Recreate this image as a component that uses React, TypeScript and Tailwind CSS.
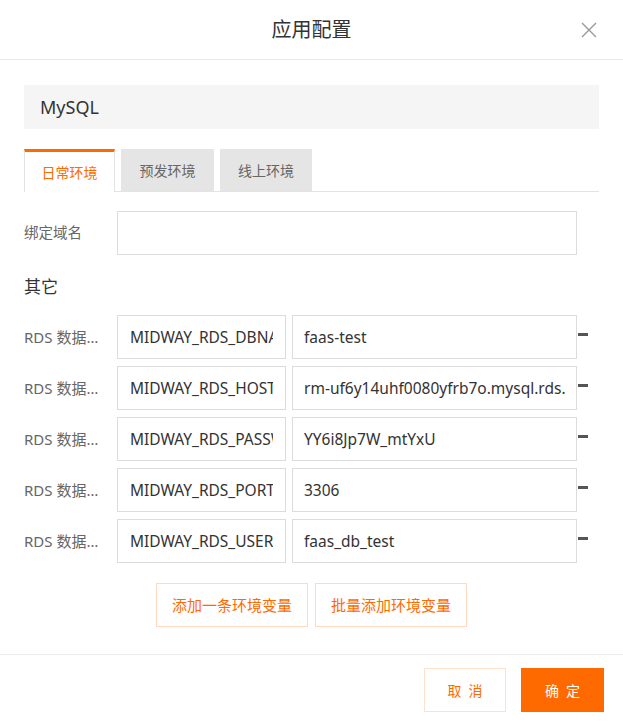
import React from "react";

const FONT = { fontFamily: '"Noto Sans", "Noto Sans CJK SC", sans-serif' };

const rows = [
  { label: "RDS 数据…", key: "MIDWAY_RDS_DBNAME", value: "faas-test" },
  { label: "RDS 数据…", key: "MIDWAY_RDS_HOST", value: "rm-uf6y14uhf0080yfrb7o.mysql.rds.aliyuncs.com" },
  { label: "RDS 数据…", key: "MIDWAY_RDS_PASSWORD", value: "YY6i8Jp7W_mtYxU" },
  { label: "RDS 数据…", key: "MIDWAY_RDS_PORT", value: "3306" },
  { label: "RDS 数据…", key: "MIDWAY_RDS_USER", value: "faas_db_test" },
];

export default function App() {
  return (
    <div className="w-[623px] h-[726px] bg-white text-[#333] overflow-hidden" style={FONT}>
      {/* header */}
      <div className="relative h-[60px] border-b border-[#e8e8e8] flex items-center justify-center">
        <span className="text-[20px] leading-[28px] text-[#333]">应用配置</span>
        <button className="absolute right-[26px] top-[22px] w-[16px] h-[16px] text-[#999]">
          <svg viewBox="0 0 16 16" width="16" height="16" fill="none" stroke="currentColor" strokeWidth="1.4">
            <path d="M1 1 L15 15 M15 1 L1 15" />
          </svg>
        </button>
      </div>

      <div className="px-[24px]">
        {/* name box */}
        <div className="mt-[25px] h-[44px] bg-[#f5f5f5] flex items-center px-[16px] text-[18px] text-[#333]">
          MySQL
        </div>

        {/* tabs */}
        <div className="mt-[20px] flex items-end gap-[6px] border-b border-[#e3e3e3] h-[43px]">
          <div className="h-[43px] w-[91px] -mb-px bg-white border-t-[3px] border-t-[#ff6a00] border-x border-x-[#e3e3e3] flex items-center justify-center text-[14px] text-[#ff6a00]">
            日常环境
          </div>
          <div className="h-[42px] w-[93px] bg-[#e5e5e5] flex items-center justify-center text-[14px] text-[#666]">
            预发环境
          </div>
          <div className="h-[42px] w-[92px] bg-[#e5e5e5] flex items-center justify-center text-[14px] text-[#666]">
            线上环境
          </div>
        </div>

        {/* domain */}
        <div className="mt-[19px] flex items-center">
          <div className="w-[93px] text-[14.5px] text-[#666]">绑定域名</div>
          <input
            readOnly
            className="w-[460px] h-[44px] border border-[#dcdcdc] px-[12px] outline-none"
          />
        </div>

        <div className="mt-[20px] text-[17px] leading-[24px] text-[#333]">其它</div>

        <div className="mt-[16px] flex flex-col gap-[7px]">
          {rows.map((r) => (
            <div key={r.key} className="flex items-center">
              <div className="w-[93px] text-[15px] text-[#666] whitespace-nowrap">{r.label}</div>
              <input
                readOnly
                value={r.key}
                className="w-[169px] h-[44px] border border-[#dcdcdc] px-[12px] text-[15.5px] text-[#333] outline-none"
                style={FONT}
              />
              <input
                readOnly
                value={r.value}
                className="ml-[6px] w-[285px] h-[44px] border border-[#dcdcdc] px-[11px] text-[15.5px] text-[#333] outline-none"
                style={FONT}
              />
              <span className="ml-[1px] w-[10px] h-[3px] bg-[#555] -translate-y-[3px]" />
            </div>
          ))}
        </div>
      </div>

      {/* add buttons */}
      <div className="mt-[20px] flex justify-center gap-[7px]">
        <button className="w-[152px] h-[44px] border border-[#ffd9c2] text-[15px] text-[#ff6a00] bg-white">
          添加一条环境变量
        </button>
        <button className="w-[152px] h-[44px] border border-[#ffd9c2] text-[15px] text-[#ff6a00] bg-white">
          批量添加环境变量
        </button>
      </div>

      {/* footer */}
      <div className="mt-[27px] border-t border-[#ebebeb] flex justify-end gap-[15px] pt-[13px] pr-[19px]">
        <button className="w-[82px] h-[44px] border border-[#ffe0cc] bg-white text-[14px] text-[#ff6a00] tracking-[7px] pl-[7px]">
          取消
        </button>
        <button className="w-[83px] h-[44px] bg-[#ff6a00] text-[14px] text-white tracking-[7px] pl-[7px]">
          确定
        </button>
      </div>
    </div>
  );
}
